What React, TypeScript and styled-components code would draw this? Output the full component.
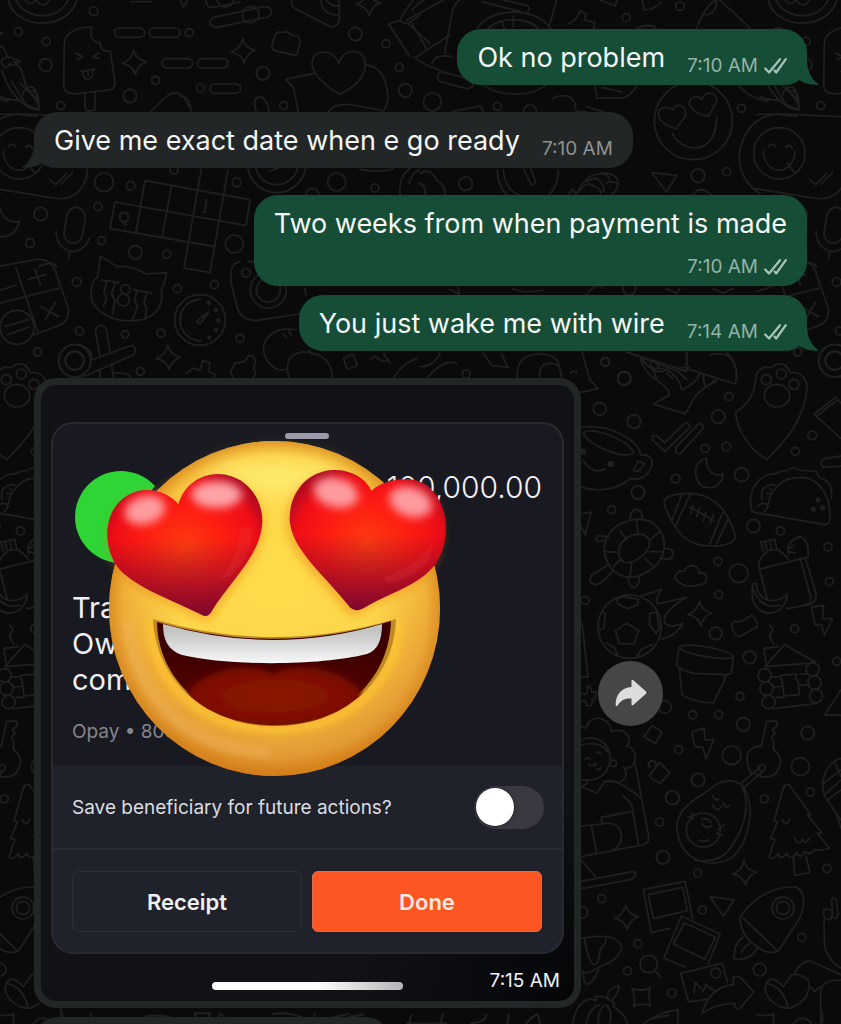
import React from "react";
import styled, { createGlobalStyle } from "styled-components";

const GlobalStyle = createGlobalStyle`
  *, *::before, *::after { box-sizing: border-box; }
  body { margin: 0; background: #0a0a0a; }
  button { font: inherit; cursor: pointer; }
`;

/* ---------- wallpaper ---------- */

type Dot = [number, number, number];

const dotsTopLeft: Dot[] = [
  [281, 34, 13], [55, 95, 12], [139, 124, 12], [137, 195, 19], [182, 317, 12], [390, 288, 20], [467, 241, 12],
  [568, 98, 12], [601, 264, 12], [789, 220, 20], [851, 317, 12], [1066, 102, 20], [1158, 131, 12], [1198, 202, 12],
  [1216, 271, 20], [312, 547, 28], [392, 557, 13], [122, 642, 20], [294, 620, 12], [90, 729, 13], [305, 722, 12],
  [406, 757, 20], [500, 763, 12], [703, 732, 27], [710, 547, 13], [1010, 546, 27], [1125, 564, 12], [230, 846, 13],
  [532, 866, 12], [643, 854, 12], [238, 993, 12], [375, 1003, 11], [483, 1000, 12], [720, 1015, 12], [421, 1114, 12],
  [113, 1055, 12], [522, 510, 12], [937, 584, 19], [738, 818, 13],
];
const dotsTopRight: Dot[] = [
  [37, 306, 27], [232, 319, 12], [619, 53, 12], [780, 18, 13], [137, 551, 20], [834, 527, 20], [920, 515, 12],
  [964, 325, 12], [556, 1085, 12], [139, 1122, 12], [628, 866, 19], [330, 334, 19], [612, 1134, 19],
];
const dotsMiddle: Dot[] = [
  [106, 66, 13], [163, 116, 20], [89, 207, 19], [192, 245, 20], [445, 230, 20], [477, 170, 12], [405, 325, 12],
  [469, 320, 13], [676, 334, 12], [727, 286, 13], [317, 416, 13], [515, 404, 21], [204, 457, 20], [125, 509, 12],
  [550, 558, 20], [631, 573, 12], [774, 621, 12], [778, 725, 12], [444, 664, 12], [506, 700, 28], [446, 764, 12],
  [437, 880, 19], [674, 866, 12], [539, 952, 19], [800, 964, 12], [45, 781, 12], [683, 36, 12],
];
const dotsBottom: Dot[] = [
  [285, 81, 19], [510, 49, 12], [368, 105, 12], [446, 104, 12], [520, 133, 20], [713, 159, 20], [326, 209, 12],
  [485, 226, 28], [691, 260, 27], [721, 336, 12], [384, 300, 20], [583, 357, 12], [307, 353, 20], [269, 426, 12],
  [279, 532, 20], [383, 579, 12], [771, 565, 12], [95, 656, 12], [397, 690, 12], [204, 791, 12], [173, 873, 12],
  [695, 772, 12], [569, 869, 19], [306, 939, 12], [35, 697, 18],
];

const Dots = ({ items }: { items: Dot[] }) => (
  <>
    {items.map(([x, y, r]) => (
      <circle key={`${x}-${y}`} cx={x} cy={y} r={r} />
    ))}
  </>
);

const Sparkle = ({ x, y }: { x: number; y: number }) => (
  <path transform={`translate(${x} ${y})`} d="M-2-37Q4-9 36-2Q10 7 3 36Q-5 9-36 3Q-9-6-2-37Z" />
);

const Region = ({ x, y, children }: { x: number; y: number; children: React.ReactNode }) => (
  <g transform={`translate(${x} ${y}) scale(.33333)`}>{children}</g>
);

const WallpaperSvg = styled.svg`
  position: absolute;
  inset: 0;
  width: 100%;
  height: 100%;
`;

const Wallpaper = () => (
  <WallpaperSvg aria-hidden="true">
    <defs>
      <g id="doodles" fill="none" stroke="#1f1f20" strokeWidth="5" strokeLinecap="round" strokeLinejoin="round">
        <Region x={0} y={0}>
          <Dots items={dotsTopLeft} />
          <Sparkle x={403} y={187} />
          <Sparkle x={730} y={153} />
          <Sparkle x={1105} y={10} />
          <Sparkle x={505} y={1073} />
          <path d="M25 0C45 90 205 95 230 0M48 0C75 60 175 65 205 0M75 0q15 20 35 0q15 30 40 0" />
          {/* ice lolly */}
          <path d="M193 130C196 95 235 80 275 82C265 115 285 130 300 128C300 148 310 156 331 153L345 250Q345 268 325 270L225 282Q192 280 191 258ZM255 284V325Q262 338 284 330L286 280M228 160l20 10l-18 10M298 158l-20 12l20 6M243 214l41-6M250 214v12q12 26 28 0v-16M264 216v12" />
          <rect x="344" y="84" width="90" height="28" rx="14" />
          <rect x="448" y="84" width="92" height="28" rx="14" />
          <rect x="486" y="176" width="92" height="28" rx="14" />
          <rect x="592" y="176" width="92" height="28" rx="14" />
          <rect x="630" y="252" width="92" height="28" rx="14" />
          {/* chilli */}
          <path d="M-10 135Q20 140 20 172M5 190Q0 170 30 172L62 184Q50 192 42 184M5 190Q20 215 30 190Q45 200 46 190C80 210 60 250 100 290Q118 315 117 328C80 330 30 290 5 210M88 272q25 0 27 22" />
          <path d="M-10 95l18 5l-18 10M0 290q30 14 60 8" />
          {/* sticks and slice */}
          <path d="M640 52L790 20Q812 18 815 38Q812 52 790 54L650 82Q628 80 629 65ZM617 0Q620 25 640 22L720 6" />
          <circle cx="752" cy="44" r="25" />
          <circle cx="676" cy="-4" r="25" />
          <path d="M875 0Q872 22 890 28L990 80Q1016 82 1018 55V0M963 0Q965 45 1018 46M980 0q15 22 38 18M540 0l10 20l14-20M395 5h60" />
          <path d="M826 105Q830 92 850 98Q862 90 872 105L892 108Q903 118 900 130L892 158Q890 168 876 164L825 152Q812 145 816 135Z" />
          {/* heart card */}
          <path d="M1016 190C1035 140 1090 145 1095 185C1100 225 1070 260 1018 283C965 250 930 215 937 180C945 145 1005 150 1016 190ZM942 220L857 238L880 262L895 336M1098 194C1150 200 1160 250 1164 290Q1160 330 1144 336M985 336Q1000 310 1050 314L1140 330" />
          {/* backpack */}
          <path d="M1195 62L1166 72L1230 170M1200 60Q1215 30 1240 0M1195 62L1225 72L1290 130M1225 70L1260 45" />
          <path d="M450 335L505 285Q530 270 550 290L575 332M540 288q25 0 32 30M768 332Q755 295 780 290Q800 295 808 335" />
          {/* smiling tag */}
          <path d="M-10 344Q40 338 110 350M262 508C262 560 225 605 160 594L-20 565M150 540l18 14l30-32M182 552l36-34" />
          <circle cx="58" cy="460" r="77" />
          <path d="M10 450C10 530 100 530 105 455M26 440q4-16 20 0M78 444q4-16 20 0M82 490l18 24q16 6 18-8" />
          {/* crossword */}
          <path d="M435 542L745 598M345 606L735 676M330 686L645 740M552 804L630 818L684 510M435 542L408 696M515 556L486 712M604 508L552 804M345 606L330 686M750 600L738 676" />
          <text x="355" y="666" fontFamily="Liberation Sans, sans-serif" fontSize="44" transform="rotate(8 370 650)" strokeWidth="3">Q</text>
          <text x="612" y="630" fontFamily="Liberation Sans, sans-serif" fontSize="44" transform="rotate(8 620 620)" strokeWidth="3">j</text>
          <circle cx="830" cy="490" r="88" />
          <circle cx="830" cy="490" r="64" />
          <path d="M805 514l30-10M1200 585Q1195 530 1230 505M1228 550q5-30 30-40M1080 508q60 12 100-2" />
          {/* moon and microphone */}
          <path d="M0 625C10 660 35 670 58 664C50 700 25 712 0 710" />
          <rect x="196" y="622" width="56" height="108" rx="28" transform="rotate(9 224 676)" />
          <path d="M168 696C175 770 250 770 268 714M210 752l-5 24" />
          {/* calculator */}
          <path d="M-10 800L110 778Q150 775 165 810L205 925Q208 965 180 975L100 1005M48 804L115 1000M-10 912L178 864M-10 874l56-18M84 838l54-14M104 806l18 50M124 920l52 30M166 906l-30 54" />
          <circle cx="51" cy="982" r="51" />
          <path d="M16 980l70-22M22 1004l64-22" />
          {/* cat */}
          <path d="M300 768L352 800Q395 795 438 822L500 818Q498 838 484 870C495 930 450 965 390 962C320 965 265 920 274 870Q278 840 292 832Q300 800 300 768ZM305 840l52 8M320 845l-8 30l8 20l-10 24M345 848l-10 34l10 20l-8 40M400 868l56 12M412 870l-8 30l8 20l-14 38M440 878l-8 30l8 20l-6 30" />
          <circle cx="376" cy="868" r="14" />
          <circle cx="370" cy="900" r="18" />
          {/* stopwatch */}
          <circle cx="600" cy="960" r="76" />
          <path d="M600 898A62 62 0 1 0 604 1022M626 935L592 962Q590 972 602 970Z" />
          <g fill="#1f1f20">
            <circle cx="626" cy="908" r="4" /><circle cx="648" cy="930" r="4" /><circle cx="655" cy="961" r="4" />
            <circle cx="648" cy="990" r="4" /><circle cx="628" cy="1012" r="4" />
          </g>
          {/* camera */}
          <path d="M720 785C690 790 690 820 694 850L712 925Q725 960 765 962L900 942M800 790L745 784M915 865l2 20" />
          <circle cx="805" cy="870" r="54" />
          <circle cx="805" cy="870" r="36" />
          {/* propeller and nuts */}
          <circle cx="224" cy="1082" r="27" />
          <path d="M275 1070C270 1020 180 1020 176 1080C178 1130 220 1140 262 1125L400 1065Q415 1045 395 1036L275 1080M300 1068L286 995Q288 975 305 976Q318 980 320 995L330 1055M300 1110v26M335 1096l6 40M345 1120q40-5 50 16" />
          <path d="M560 1120l20-16l20 8l8-30l22 6l-4 26l20 10l-6 14M695 1110l10-20l30-6l10-18q18 0 22 18l-6 20l6 18l-12 16M692 1112l6 24" />
          <path d="M890 990C840 980 790 1000 790 1050C800 1100 840 1120 862 1105C862 1060 900 1050 940 1060C985 1070 1000 1110 995 1138M862 1105q0 20 10 34M850 1000l10 14M866 992l8 16M928 1050l8 14" />
          <path d="M1030 1075l30-12l12 34l-30 10ZM1112 1080q10-20 28 0q20 8 26 0M1180 1136q30-50 70-60M1150 1060l20 30" />
        </Region>
        <Region x={420} y={0}>
          <Dots items={dotsTopRight} />
          {/* bag strap and ball */}
          <path d="M-24 30Q0 5 12 0M-40 60L70 0M-24 70l46 80M-10 170L90 105M118 0Q100 15 96 40L74 160M-20 170Q20 200 60 210M36 190q10-30 60-20M60 214L155 238Q170 262 140 266L60 245Q45 235 60 214ZM185 5L320 40Q335 25 320 16L250 0M410 0l-24 84M172 85C210 20 350 20 392 85M205 85C240 50 320 50 355 85M245 62l8 22M280 50v30M190 252C230 292 340 292 380 252" />
          <path d="M446 72l22-16l14-24l16 10l-4 18l30 8L520 88M525 256l5 38h80q25-10 40-36M545 262l60 14M650 85q40-18 58 0M830 84Q870 -10 900 0L990 84M850 45q40 0 40-45M540 0l46 18l6-18M666 0l8 30q30 0 50-24" />
          {/* adoring face */}
          <circle cx="820" cy="362" r="117" />
          <path d="M757 330C775 300 805 325 796 350L768 385C735 380 710 355 716 335C725 318 750 320 757 330ZM846 298C855 270 892 275 890 305L866 348C830 345 800 320 810 300C820 285 838 290 846 298ZM757 400C790 465 890 465 890 352" />
          <path d="M398 296q50-25 68 16q-5 30 30 22M500 320l50 16M100 334l80-16l10 16M955 255q30 40 90 48M1055 245l44 70l38 14Q1130 250 1108 262Q1085 275 1090 285M1080 250l60 56" />
          {/* chat tag outline */}
          <path d="M1262 350L1090 342Q980 340 958 460Q955 540 1020 580" />
          <path d="M695 518L770 526L740 576ZM0 520q30-20 50 20q30 20 24 44M-4 550q20 0 20 34M232 510q0 50 30 76M415 510q0 50-30 76M250 510q5 60 50 76M312 508l20 44q12 6 14-8l-14-40" />
          <path d="M446 584l12-18l10 16l20-30q20-30 50-30q40-10 56 20q0 30-20 42M480 572q20-30 40-14q30 10 20 30M500 545q30-20 40 0q20 20 10 30M540 520q30 0 30 26M560 550q20-10 34 4" />
          <path d="M820 584q20-30 54 0M88 868l30 14l-6-26M280 866q30 16 90 4M500 884q30-40 50-20M740 866l30 14l10-14M880 866l30 14l30-16M1135 800Q1180 780 1190 800" />
          {/* strip between the last text and the photo */}
          <path d="M0 1100q40 0 60-40M20 1136q50-60 90-46M190 1060l24 36l50 6l-20-40M292 1136q-5-70 60-74q60 0 66 36l8 38M360 1130q-4-40 30-40q30 0 30 20M620 1056L770 1112M665 1075q40 60 80 30M770 1112l30 26M800 1060v50M690 1090l20 46M740 1120l20 16M780 1104l30-4M870 1065q80-20 80 70" />
        </Region>
        <Region x={570} y={340}>
          <Dots items={dotsMiddle} />
          <Sparkle x={390} y={821} />
          <path d="M36 36L60 120L84 146L30 158M0 100q10-14 20 0" />
          {/* shark */}
          <path d="M170 36L350 94V36M350 86L496 132Q510 80 470 36M212 56C225 120 300 130 298 165L250 192L345 221C365 200 355 165 440 122M215 58q25 34 52 26l-10-20M265 84q60 10 70 66Q380 130 388 102M400 104q0 30 8 36Q432 130 435 112" />
          {/* paw */}
          <path d="M497 216C540 190 555 160 558 105C570 80 590 78 603 84C620 66 650 66 660 98C690 95 710 110 711 145C705 240 640 310 590 358C540 330 500 270 497 216Z" />
          <circle cx="589" cy="119" r="15" /><circle cx="634" cy="102" r="15" /><circle cx="672" cy="133" r="15" />
          <ellipse cx="621" cy="167" rx="38" ry="34" />
          <circle cx="794" cy="62" r="48" /><circle cx="794" cy="62" r="29" />
          {/* ticks and moon */}
          <path d="M246 292Q255 280 266 292L284 308L344 250Q358 246 360 262L284 334L248 300ZM318 322L385 252Q400 250 400 264L332 340Q314 345 318 322ZM410 356C370 360 365 420 400 440C430 450 455 435 460 402C435 412 405 395 410 356Z" />
          {/* cup */}
          <path d="M30 262C120 250 205 300 212 345C250 340 250 370 240 390Q220 425 180 415C150 445 90 460 30 440M192 340C150 360 50 310 40 280C60 255 180 300 192 340ZM190 392l14-28l20 6l-18 24ZM40 362q30 45 66 24" />
          <circle cx="122" cy="372" r="7" fill="#1f1f20" /><circle cx="38" cy="335" r="7" fill="#1f1f20" />
          {/* rugby ball */}
          <path d="M283 495C280 470 300 465 340 461C410 455 470 490 496 590C492 608 480 612 450 617C350 630 310 570 283 495ZM335 465L304 545M360 463L316 560M458 518L418 616M475 535L438 616M358 500L432 542M370 496l-8 24M388 504l-8 26M408 516l-8 26M430 526l-10 26" />
          {/* folder tile */}
          <path d="M813 190L798 172L732 222L813 296M740 228l60-46M813 348L765 356Q745 366 760 382L813 378" />
          {/* taco */}
          <path d="M545 510C530 450 570 400 615 402Q640 390 650 392Q670 376 690 392Q715 390 740 396Q745 410 748 414Q790 420 784 474M545 510Q552 520 570 520L765 554Q780 552 780 530C782 460 740 410 690 412C640 412 605 440 595 490M575 480Q570 430 615 435M562 500q20-20 34 0l-14 16M592 460h10M600 448h4" />
          <g fill="#1f1f20"><circle cx="744" cy="481" r="5" /><circle cx="730" cy="508" r="5" /><circle cx="758" cy="503" r="5" /></g>
          {/* turtle */}
          <path d="M105 610C120 550 200 520 250 550C300 590 290 660 240 690C200 720 150 720 120 680Q96 640 105 610ZM148 620C165 580 225 570 238 600C245 640 190 670 165 668Q140 655 148 620ZM180 540q0-30 20-32q20 4 17 32M102 600q-24 10-24-6q4-14 40 0M285 625q30 0 22 24q-10 16-36 4M118 672L66 705Q50 725 75 735Q100 730 126 695M175 712q0 30 15 30q18 0 18-32M200 540l4 38M150 572l20 26M106 634l40 4M240 600l34-28M240 634l40 2M225 655l28 26M180 712l5-44M130 680l22-22" />
          {/* cloud and banana bag */}
          <path d="M335 732Q312 720 316 706Q325 690 342 694Q355 670 376 680Q390 690 388 700Q412 695 409 718Q408 735 385 734Q360 745 335 732ZM30 522l34-6L45 584L34 560" />
          <path d="M568 688C562 660 580 640 600 630L625 630L650 650L655 660M568 688L710 652M568 688L592 776M692 660L722 770Q726 795 700 796M705 652L738 760Q740 790 715 795L650 806M580 632l-8-26l42-8l6 30M586 604l4 26M600 600l4 28M655 640Q650 600 690 590Q720 600 714 650M655 635l20 4M660 625l12-10M548 732l12-2v14C575 790 620 790 652 764C650 800 620 820 595 820C560 815 540 790 548 732ZM550 748q20 60 80 48" />
          {/* football with flames */}
          <circle cx="179" cy="860" r="95" />
          <path d="M136 872L170 850L206 872L192 912L148 910ZM140 778l20-8l46 8l-4 16l-30 12l-28-14ZM240 820l20-4l8 50l-10 14l-20-26ZM100 816l6 4l-4 44l-12 6M108 908l26 16l8 20M250 912l-36 16l-12 20M212 768L275 748Q255 775 262 792L350 772Q270 820 285 850Q300 865 340 850Q310 895 275 896M36 850L54 1010L36 1012" />
          <path d="M484 856Q490 840 505 846L518 842L546 826Q560 835 562 860L508 890Q492 888 484 856ZM725 802l36-6l-4 40l30 0l-24 50l-8-32h-20ZM598 856q18 10 4 24q-8 10 10 32" />
          {/* flower pot */}
          <path d="M328 920C350 905 480 930 490 950C470 965 340 945 328 920ZM326 924L320 975Q330 990 370 1000L470 1004L484 1000L490 950M330 985v34M468 1006l-6 14" />
          {/* house */}
          <path d="M584 980L644 914L735 966M584 980L710 970M588 972L582 926L625 920M634 1020v-14l44-4v18M600 1012l28-2M690 1002l20 0" />
          <circle cx="728" cy="988" r="20" /><circle cx="584" cy="1006" r="20" />
        </Region>
        <Region x={570} y={680}>
          <Dots items={dotsBottom} />
          <Sparkle x={524} y={579} />
          <Sparkle x={169} y={712} />
          <circle cx="734" cy="8" r="20" /><circle cx="738" cy="48" r="20" /><circle cx="590" cy="26" r="20" /><circle cx="596" cy="66" r="20" />
          <path d="M610 86L740 70M636 0l6 48l46-4l-4-44M612 22l26-4M690 16l28-2M618 52h24M332 0L336 45Q380 70 430 68L464 0M813 30L764 104L813 106" />
          <path d="M36 40q20 10 16-20q10-4 14 16q20-4 10 12q4 14-10 10q4 26-16 18q-2-20-14-12" />
          {/* reading child */}
          <path d="M34 140Q50 150 52 136C60 105 120 105 124 155Q175 140 178 185Q176 195 168 198C200 200 205 250 180 262Q165 268 160 262Q180 290 150 306Q130 305 105 304L80 340L34 320M34 180C80 160 120 190 122 240C110 290 80 305 34 300M34 195Q90 180 112 215M46 238q8-10 14 0M80 218q8-4 12 4M56 252q10 10 22 0M80 266q12 6 14-4M105 304Q140 295 210 352M195 248L236 470Q240 490 215 495L34 530M158 346Q190 370 188 395L206 496M188 394L94 412L96 432L34 438M96 432Q150 420 155 470Q150 505 130 508M64 434L80 520M34 540L80 594M34 604L190 574Q205 580 185 598L34 626M34 320Q60 310 50 300" />
          <circle cx="130" cy="250" r="10" />
          {/* cube, plug, bolt */}
          <path d="M246 136L276 156L256 190L222 170ZM240 284L268 248L300 278L270 310L242 294ZM240 262q-14-14 6-20q20 4 10 20M366 156L402 144L406 180L432 178L408 236L398 202L374 200Z" />
          {/* key */}
          <path d="M590 125L616 122Q622 124 622 138L606 150L616 160L604 172L612 186L610 208Q640 230 628 260Q620 295 575 290L540 275Q525 240 535 215Q550 198 574 198L590 125M510 312L570 262M522 322L582 272" />
          <circle cx="576" cy="264" r="10" />
          {/* avocado */}
          <path d="M320 440C325 370 400 350 435 315Q480 290 515 315C560 370 540 480 490 530C440 565 330 560 320 440ZM518 325C540 370 525 440 490 490C470 530 430 550 375 540M428 346q4 16 18 12M428 374q10 26 26 6M458 366q8 24 22 10" />
          <circle cx="400" cy="450" r="51" />
          <path d="M388 480q14 8 28 0M396 430q10 20 30 6M360 420l8-20M355 410l16 6M440 460l20 6M444 450l18-16M395 418q20-6 28 10" />
          {/* tree */}
          <path d="M640 325Q650 300 665 325L722 404L712 406L756 458L742 460L778 505Q750 515 735 508Q720 530 705 515Q690 540 680 518Q660 545 650 520Q630 545 625 520Q605 545 597 530L615 478L602 476L622 426L612 422ZM670 532l4 54l46-8l-12-50M636 418q14 28 22 0M672 468q12 34 26 10q10 20 20-4" />
          {/* balloon */}
          <path d="M813 235C760 250 750 310 765 350L813 420M813 300L768 340M813 270L760 310M813 330L772 360M800 405l13 40M795 250L813 290" />
          {/* photos */}
          <path d="M220 628L345 604L368 716M220 628L244 758L300 745M235 644L338 622L352 692L250 716ZM334 708L450 762L414 852M334 708L282 834L345 862M344 728L436 772L404 838L310 792Z" />
          <path d="M332 880L456 850L472 905M332 880L356 966L410 958M372 940L376 906L400 934L408 914L436 936M396 1000Q420 920 490 914V892Q500 885 515 896L552 936L510 985Q495 995 494 970Q440 970 396 1000Z" />
          <circle cx="437" cy="879" r="15" />
          <path d="M420 650L492 660L460 708Z" />
          {/* rocket */}
          <path d="M510 712C550 650 620 615 680 622C710 640 705 690 680 730L625 812Q600 825 570 806Q510 770 510 712ZM518 712L618 808M520 772Q490 790 492 838Q550 840 562 800M514 818q10-20 26-28" />
          <circle cx="639" cy="684" r="33" /><circle cx="639" cy="684" r="20" />
          {/* hand */}
          <path d="M760 700q0-20 22-10q10 10 0 28q-20 6-22-18M788 690l-4-30q10-14 16 4l4 40q-4 16-14 8M762 722L764 800Q780 850 813 864" />
          {/* mitten and boot */}
          <path d="M34 775Q140 755 155 800Q150 840 85 862Q60 880 34 880M40 872q0 40 10 42q20-5 36-46M44 780q6 40 20 70Q80 860 85 840L92 805Q106 800 108 774M590 910C570 940 620 990 660 984C700 970 725 940 715 900Q690 880 664 884L640 920Q600 880 590 910ZM590 910Q640 920 655 984M672 882Q690 845 720 842L813 884M722 922l12 12l16-14M752 1030V940Q750 900 813 900" />
          <circle cx="236" cy="852" r="26" /><path d="M254 872l18 18" />
          {/* pumpkin */}
          <path d="M8 1030C20 960 60 950 78 962L76 950Q100 944 134 970L130 980Q165 1000 172 1030M48 1030Q60 980 90 975M86 1030Q80 1000 104 975M118 1030Q130 1000 110 976M112 952Q110 925 146 918Q150 935 126 960M186 926q30 10 54-2q-6 30 2 54q-26-12-52 2q8-30-4-54ZM222 1030Q260 1000 324 988V1030M246 1016l50-10M562 1004q25 6 50-2q-4 20 0 30M670 1030q30-30 54 0" />
        </Region>
        {/* strip under the photo */}
        <g transform="translate(0 980) scale(.3954)">
          <path d="M158 85v22M228 85q5 22 24 24M365 108q-6-20 25-18q50 0 48 16M478 100l20-4l-6-12h40l-6 14M550 98l8-14l14 14l28 4M612 108q20-15 40 0M690 86q50-8 100 22M700 96l70 12M795 85v22M800 104l80-18M860 104q20-14 60-16M1030 110h100l-10 24M1040 90l-6 20M1120 85l-6 24M1230 86q0 20-40 24M1286 86q0 30-16 44M1320 124q20-30 40-38l12 44" />
        </g>
      </g>
      <pattern id="wallpaper" width="760" height="1024" patternUnits="userSpaceOnUse">
        <use href="#doodles" />
        <use href="#doodles" x="-760" />
        <use href="#doodles" x="760" />
      </pattern>
    </defs>
    <rect width="100%" height="100%" fill="url(#wallpaper)" />
  </WallpaperSvg>
);

/* ---------- messages ---------- */

type Side = "in" | "out";

const Chat = styled.main`
  position: relative;
  height: 100vh;
  overflow: hidden;
  background: #0a0a0a;
  font-family: Inter, "Liberation Sans", sans-serif;
`;

const Thread = styled.div`
  position: relative;
  display: flex;
  flex-direction: column;
  gap: 27px;
  padding: 29px 34px 0;
`;

const Group = styled.div`
  display: flex;
  flex-direction: column;
  gap: 9px;
`;

const Bubble = styled.div<{ $side: Side; $stacked?: boolean }>`
  position: relative;
  align-self: ${(p) => (p.$side === "out" ? "flex-end" : "flex-start")};
  display: flex;
  flex-direction: ${(p) => (p.$stacked ? "column" : "row")};
  align-items: flex-end;
  column-gap: 22px;
  row-gap: 15px;
  padding: 11px 20px 9px;
  border-radius: 24px;
  background: ${(p) => (p.$side === "out" ? "#154d37" : "#232626")};
`;

const Message = styled.p`
  margin: 0;
  font-size: 27px;
  line-height: 36px;
  color: #f4f7f5;
`;

const Meta = styled.span<{ $side: Side }>`
  display: flex;
  align-items: center;
  gap: 6px;
  font-size: 19px;
  line-height: 20px;
  white-space: nowrap;
  color: ${(p) => (p.$side === "out" ? "#94b3a6" : "#8e9191")};
`;

const TailSvg = styled.svg<{ $side: Side }>`
  position: absolute;
  bottom: 0;
  ${(p) => (p.$side === "out" ? "right: -12px;" : "left: -12px; transform: scaleX(-1);")}
`;

const Tail = ({ side }: { side: Side }) => (
  <TailSvg $side={side} width="32" height="40" viewBox="0 0 32 40" aria-hidden="true">
    <path
      fill={side === "out" ? "#154d37" : "#232626"}
      d="M20 8V16C20.500 26 23.500 33.500 32 39.500C24 40.300 17.500 38.500 12.300 35C8.500 38 4 39.600 0 40V8Z"
    />
  </TailSvg>
);

const Ticks = () => (
  <svg width="23" height="16" viewBox="0 0 23 16" fill="none" stroke="#a9c4b8" strokeWidth="2.200" strokeLinecap="round" strokeLinejoin="round" role="img" aria-label="Delivered">
    <path d="M1.200 10.500L5 14.500L16 1.200M10.500 12.500L12.200 14.500L21.800 1.200" />
  </svg>
);

const Text = ({ side, time, stacked, tail, children }: { side: Side; time: string; stacked?: boolean; tail?: boolean; children: string }) => (
  <Bubble $side={side} $stacked={stacked}>
    {tail && <Tail side={side} />}
    <Message>{children}</Message>
    <Meta $side={side}>
      <time>{time}</time>
      {side === "out" && <Ticks />}
    </Meta>
  </Bubble>
);

/* ---------- photo message ---------- */

const PhotoRow = styled.div`
  display: flex;
  align-items: center;
  gap: 17px;
`;

const Photo = styled.article`
  position: relative;
  flex: 0 1 547px;
  padding: 37px 10px 10px;
  border: 7px solid #232626;
  border-radius: 22px;
  background: radial-gradient(circle at 100% 100%, #040507 0, #111216 220px);
`;

const Sheet = styled.section`
  border: 2px solid #292a30;
  border-radius: 22px;
  overflow: hidden;
  background: #1f222a;
`;

const Summary = styled.div`
  display: flex;
  flex-direction: column;
  height: 342px;
  padding: 9px 20px 0 19px;
  background: #191921;
`;

const Grabber = styled.span`
  align-self: center;
  width: 44px;
  height: 6px;
  border-radius: 3px;
  background: #9c9bab;
`;

const AmountRow = styled.div`
  display: flex;
  justify-content: space-between;
  align-items: flex-start;
  margin-top: 32px;
  padding-left: 3px;
`;

const Party = styled.span<{ $tone: string; $overlap?: boolean }>`
  width: 92px;
  height: 92px;
  margin-left: ${(p) => (p.$overlap ? "-24px" : "0")};
  border-radius: 50%;
  background: ${(p) => p.$tone};
`;

const Parties = styled.div`
  display: flex;
  flex-direction: row-reverse;
`;

const Amount = styled.strong`
  font-size: 30px;
  line-height: 32px;
  font-weight: 300;
  color: #f0f0f2;
`;

const Title = styled.h2`
  margin: 27px 0 0;
  font-size: 29px;
  line-height: 36px;
  font-weight: 400;
  color: #f0f0f2;
`;

const Bank = styled.p`
  margin: 22px 0 0;
  font-size: 19px;
  line-height: 24px;
  color: #85858d;
`;

const SaveRow = styled.label`
  display: flex;
  align-items: center;
  justify-content: space-between;
  height: 84px;
  padding: 0 18px 0 19px;
  border-bottom: 2px solid #292b32;
  font-size: 19px;
  color: #dcdde0;
`;

const Toggle = styled.input`
  appearance: none;
  display: flex;
  align-items: center;
  width: 70px;
  height: 43px;
  margin: 0;
  padding: 2px;
  border-radius: 22px;
  background: #3a3941;
  &::before {
    content: "";
    width: 38px;
    height: 38px;
    border-radius: 50%;
    background: #fff;
    box-shadow: 0 0 3px #15151a;
  }
  &:checked { justify-content: flex-end; }
`;

const Actions = styled.div`
  display: grid;
  grid-template-columns: 1fr 1fr;
  gap: 10px;
  padding: 21px 20px 20px 19px;
`;

const Action = styled.button<{ $primary?: boolean }>`
  height: 61px;
  border: 1px solid ${(p) => (p.$primary ? "#d9714e" : "#2c2e35")};
  border-radius: 6px;
  background: ${(p) => (p.$primary ? "#fd5622" : "transparent")};
  color: ${(p) => (p.$primary ? "#ffe9e0" : "#f0f0f2")};
  font-size: 22px;
  font-weight: 600;
`;

const PhotoFooter = styled.footer`
  display: grid;
  grid-template-columns: 1fr 191px 1fr;
  align-items: end;
  height: 37px;
`;

const HomeBar = styled.span`
  grid-column: 2;
  height: 8px;
  margin-bottom: 1px;
  border-radius: 4px;
  background: linear-gradient(90deg, #fff 55%, #b4b4b6);
`;

const PhotoTime = styled.time`
  justify-self: end;
  padding-right: 4px;
  font-size: 19px;
  line-height: 20px;
  color: #f2f2f2;
`;

const EmojiSvg = styled.svg`
  position: absolute;
  left: 59px;
  top: 45px;
`;

const HEART_LEFT =
  "M445 403C462 345 510 312 565 312C645 314 697 380 697 455C692 560 600 630 541 730Q530 744 512 733C430 690 330 660 270 600C235 560 225 500 236 455C250 395 300 360 350 360C390 360 425 378 445 403Z";
const HEART_RIGHT =
  "M215 362C195 322 150 298 100 300C20 303-33 370-31 450C-25 540 70 610 150 712Q165 728 190 715C260 670 350 650 400 590C440 540 445 470 430 420C410 360 370 328 320 328C275 328 235 342 215 362Z";
const MOUTH = "M153 619Q274 655 396 619C394 682 342 726 275 726C208 726 156 682 153 619Z";

const HeartEyes = () => (
  <EmojiSvg width="360" height="360" viewBox="100 430 360 360" role="img" aria-label="Smiling face with heart eyes">
    <defs>
      <radialGradient id="face" gradientUnits="userSpaceOnUse" cx="276" cy="570" r="212">
        <stop offset="0" stopColor="#ffdc4c" />
        <stop offset=".5" stopColor="#fdd64a" />
        <stop offset=".72" stopColor="#f0b038" />
        <stop offset=".88" stopColor="#e19a35" />
        <stop offset="1" stopColor="#cf7412" />
      </radialGradient>
      <radialGradient id="rim" gradientUnits="userSpaceOnUse" cx="275" cy="608" r="168">
        <stop offset=".9" stopColor="#dd8a1a" stopOpacity="0" />
        <stop offset="1" stopColor="#d27e18" stopOpacity=".7" />
      </radialGradient>
      <linearGradient id="heartShade" x1="0" y1="0" x2="0" y2="1">
        <stop offset=".45" stopColor="#5a0634" stopOpacity="0" />
        <stop offset="1" stopColor="#5a0634" stopOpacity=".75" />
      </linearGradient>
      <radialGradient id="heart" cx=".5" cy=".52" r=".62">
        <stop offset="0" stopColor="#ff3c10" />
        <stop offset=".45" stopColor="#fd1c12" />
        <stop offset=".75" stopColor="#ee0e16" />
        <stop offset="1" stopColor="#9c0724" />
      </radialGradient>
      <linearGradient id="teeth" x1="0" y1="0" x2="0" y2="1">
        <stop offset=".2" stopColor="#c4c4c4" />
        <stop offset=".75" stopColor="#e8e8ea" />
        <stop offset="1" stopColor="#f8f8f8" />
      </linearGradient>
      <linearGradient id="mouth" x1="0" y1="0" x2="0" y2="1">
        <stop offset=".3" stopColor="#3c0000" />
        <stop offset="1" stopColor="#650600" />
      </linearGradient>
      <radialGradient id="tongue" cx=".5" cy=".5" r=".6">
        <stop offset="0" stopColor="#8e1500" />
        <stop offset=".7" stopColor="#7e1000" />
        <stop offset="1" stopColor="#650800" />
      </radialGradient>
      <clipPath id="mouthClip"><path d={MOUTH} /></clipPath>
      <filter id="soft" x="-30%" y="-30%" width="160%" height="160%"><feGaussianBlur stdDeviation="3" /></filter>
      <filter id="glow" x="-50%" y="-50%" width="200%" height="200%"><feGaussianBlur stdDeviation="15" /></filter>
      <filter id="haze" x="-50%" y="-100%" width="200%" height="300%"><feGaussianBlur stdDeviation="12" /></filter>
    </defs>
    <ellipse cx="274.500" cy="608.500" rx="165.500" ry="167.500" fill="url(#face)" />
    <ellipse cx="274.500" cy="608.500" rx="165.500" ry="167.500" fill="url(#rim)" />
    <ellipse cx="276" cy="478" rx="66" ry="16" fill="#fff07a" opacity=".8" filter="url(#haze)" />
    <path d="M128 620C132 690 182 750 270 752" stroke="#f3b765" strokeWidth="12" fill="none" opacity=".35" filter="url(#soft)" />
    <path d="M150 622C152 688 206 730 275 730C344 730 397 688 399 622" stroke="#ffc62e" strokeWidth="5" fill="none" filter="url(#soft)" />
    <path d={MOUTH} fill="#c08a22" />
    <path d="M157 622Q274 656 391 621C389 682 340 725 275 725C210 725 158 682 157 622Z" fill="url(#mouth)" />
    <g clipPath="url(#mouthClip)">
      <path d="M184 704C190 670 252 658 273 675C296 658 358 670 366 704C354 732 196 732 184 704Z" fill="url(#tongue)" filter="url(#soft)" />
    </g>
    <path d="M163 624Q274 656 382 624C382 640 378 650 367 654C320 666 228 666 182 655C168 650 163 640 163 624Z" fill="url(#teeth)" />
    <g transform="translate(30 370) scale(.33333)">
      <path d={HEART_LEFT} transform="translate(4 14)" fill="#e67a10" opacity=".45" filter="url(#glow)" clipPath="none" />
      <path d={HEART_LEFT} fill="url(#heart)" />
      <path d={HEART_LEFT} fill="url(#heartShade)" />
      <ellipse cx="345" cy="420" rx="62" ry="42" transform="rotate(-16 345 420)" fill="#ffb4b8" opacity=".85" filter="url(#glow)" />
      <ellipse cx="560" cy="374" rx="76" ry="40" fill="#ffb4b8" opacity=".9" filter="url(#glow)" />
      <path d="M632 475L668 470Q670 550 600 620L570 625Q625 560 632 475Z" fill="#f0505a" opacity=".15" />
    </g>
    <g transform="translate(300 370) scale(.33333)">
      <path d={HEART_RIGHT} transform="translate(-10 14)" fill="#e67a10" opacity=".45" filter="url(#glow)" />
      <path d={HEART_RIGHT} fill="url(#heart)" />
      <path d={HEART_RIGHT} fill="url(#heartShade)" />
      <ellipse cx="108" cy="368" rx="68" ry="44" transform="rotate(14 108 368)" fill="#ffb4b8" opacity=".85" filter="url(#glow)" />
      <ellipse cx="332" cy="396" rx="66" ry="44" transform="rotate(18 332 396)" fill="#ffb4b8" opacity=".85" filter="url(#glow)" />
      <path d="M245 625Q350 590 395 520Q400 570 350 605Q300 640 262 638Z" fill="#f0505a" opacity=".15" />
    </g>
  </EmojiSvg>
);

const ForwardButton = styled.button`
  flex: none;
  display: grid;
  place-items: center;
  width: 65px;
  height: 65px;
  padding: 0;
  border: 0;
  border-radius: 50%;
  background: #464648;
`;

const NextBubble = styled.div`
  width: 356px;
  height: 56px;
  border-radius: 24px;
  background: #232626;
`;

export default function App() {
  return (
    <>
      <GlobalStyle />
      <Chat>
        <Wallpaper />
        <Thread>
          <Text side="out" time="7:10 AM" tail>Ok no problem</Text>
          <Text side="in" time="7:10 AM" tail>Give me exact date when e go ready</Text>
          <Group>
            <Text side="out" time="7:10 AM" stacked>Two weeks from when payment is made</Text>
            <Text side="out" time="7:14 AM" tail>You just wake me with wire</Text>
          </Group>
          <Group>
            <PhotoRow>
              <Photo>
                <Sheet>
                  <Summary>
                    <Grabber />
                    <AmountRow>
                      <Parties>
                        <Party $tone="#25231f" $overlap />
                        <Party $tone="#2fd435" />
                      </Parties>
                      <Amount>100,000.00</Amount>
                    </AmountRow>
                    <Title>Tra<br />Ow<br />com</Title>
                    <Bank>Opay • 800</Bank>
                  </Summary>
                  <SaveRow>
                    Save beneficiary for future actions?
                    <Toggle type="checkbox" role="switch" />
                  </SaveRow>
                  <Actions>
                    <Action type="button">Receipt</Action>
                    <Action type="button" $primary>Done</Action>
                  </Actions>
                </Sheet>
                <PhotoFooter>
                  <HomeBar />
                  <PhotoTime>7:15 AM</PhotoTime>
                </PhotoFooter>
                <HeartEyes />
              </Photo>
              <ForwardButton type="button" aria-label="Forward">
                <svg width="32" height="28" viewBox="0 0 32 28" fill="#dcdcde" aria-hidden="true">
                  <path d="M16.500 1.500Q17 .2 18.300 1.200L31 12.600Q32 13.700 31 14.800L18.300 26Q17 27 16.500 25.700V19.500C10 19 5.500 21 2.800 26.500Q.8 28 .6 25.500C.8 15 7 8.500 16.500 8Z" />
                </svg>
              </ForwardButton>
            </PhotoRow>
            <NextBubble />
          </Group>
        </Thread>
      </Chat>
    </>
  );
}
